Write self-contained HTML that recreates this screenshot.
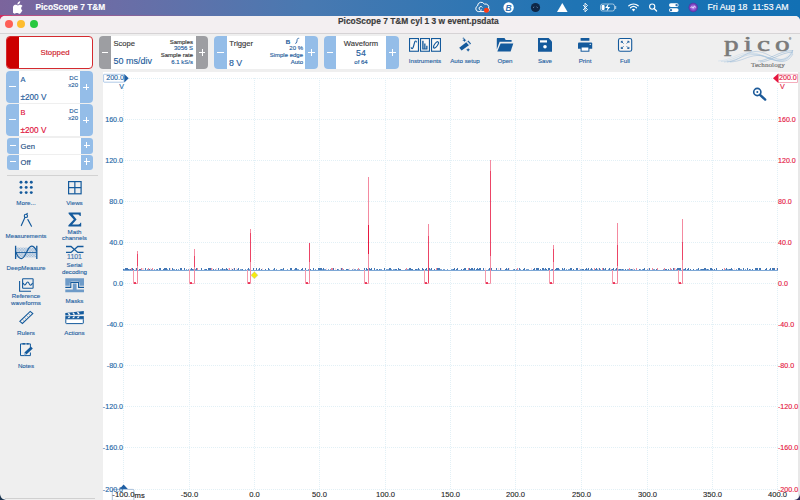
<!DOCTYPE html>
<html><head><meta charset="utf-8">
<style>
*{margin:0;padding:0;box-sizing:border-box}
html,body{width:800px;height:500px;overflow:hidden;background:#1b3a63;font-family:"Liberation Sans",sans-serif;-webkit-text-stroke-width:0.15px}
.a{position:absolute}
#menubar{left:0;top:0;width:800px;height:24px;background:linear-gradient(90deg,#7b649c 0px,#6b6da6 115px,#4979b1 305px,#1f74b4 575px,#1270b4 800px)}
.mt{color:#fff;font-size:8.3px;line-height:10px;white-space:nowrap}
#win{left:0;top:16px;width:800px;height:484px;background:#efefef;border-radius:5px 5px 5px 5px;overflow:hidden}
#title{left:0;top:0;width:800px;height:18px;background:#f3eff1;border-bottom:1px solid #d6d3d5}
.tl{width:7.8px;height:7.8px;border-radius:50%;top:4.4px}
.tt{font-weight:bold;font-size:8.4px;color:#3a3a3a;white-space:nowrap}
.panel{background:#fff;border-radius:4px;overflow:hidden}
.btn{color:#fff;text-align:center}
.bl{background:#94bde8}
.bg{background:#9d9ea2}
.blue{color:#1f5d9c}
.dk{color:#333}
.sm{font-size:6px;line-height:7px;white-space:nowrap;text-align:right}
.lab{font-size:6.2px;color:#22609f;-webkit-text-stroke:0.12px #22609f;white-space:nowrap;text-align:center;line-height:7px}
.ic{fill:#1c5a99;stroke:#1c5a99}
#chart{left:103px;top:72px;width:697px;height:428px;background:#fff}
.yl{font-size:7.9px;color:#2467a6;-webkit-text-stroke:0.15px #2467a6;text-align:right;width:40px;white-space:nowrap;line-height:8px;transform:scaleX(0.9);transform-origin:right center}
.yr{font-size:7.9px;color:#e5173f;-webkit-text-stroke:0.15px #e5173f;white-space:nowrap;line-height:8px;transform:scaleX(0.9);transform-origin:left center}
.xl{font-size:7.6px;color:#222;-webkit-text-stroke:0.1px #222;white-space:nowrap;line-height:8px;text-align:center;width:40px}
</style></head><body>
<div id="menubar" class="a">
  <svg class="a" style="left:13px;top:1px" width="10" height="13" viewBox="0 0 10 13"><path fill="#fff" d="M7.2 0.3c0.1 0.9-0.3 1.7-0.8 2.2-0.5 0.6-1.3 1-2 0.9-0.1-0.8 0.3-1.6 0.8-2.1 0.5-0.6 1.3-1 2-1zM9.4 9.3c-0.3 0.7-0.5 1-0.9 1.6-0.6 0.8-1.3 1.8-2.3 1.8-0.9 0-1.1-0.6-2.3-0.6-1.200 0-1.5 0.6-2.3 0.6-1 0-1.700-0.9-2.300-1.7C-0.300 8.800-0.5 6.500 0.300 5.200 0.900 4.300 1.800 3.800 2.700 3.800c0.900 0 1.500 0.600 2.300 0.600 0.700 0 1.200-0.600 2.300-0.600 0.800 0 1.600 0.400 2.200 1.200-1.900 1.100-1.600 3.800 0 4.300z"/></svg>
  <div class="a mt" style="left:35.5px;top:2.2px;font-weight:bold">PicoScope 7 T&amp;M</div>

 <svg class="a" style="left:470px;top:0" width="235" height="15" viewBox="470 0 235 15">
  <!-- cc icon -->
  <path d="M478.2 11.6 A3 3 0 0 1 477.6 5.9 A3.6 3.6 0 0 1 484.4 4.2 A3.2 3.2 0 0 1 488.6 8.2 A2 2 0 0 1 487 11.6 Z" fill="none" stroke="#fff" stroke-width="1"/>
  <path d="M481.8 9.9 A1.8 1.8 0 1 1 482.4 7.4" fill="none" stroke="#fff" stroke-width="1"/>
  <circle cx="486.4" cy="10.2" r="2.5" fill="#ff3b14"/>
  <!-- B circle -->
  <circle cx="508.6" cy="7.5" r="5.2" fill="#fff"/>
  <text x="508.6" y="10.6" font-family="Liberation Sans" font-weight="bold" font-style="italic" font-size="8.5" fill="#2f6fb1" text-anchor="middle">B</text>
  <!-- dark circle -->
  <circle cx="535.5" cy="7.5" r="4.6" fill="#0f2746"/>
  <path d="M533.2 7.6 l1 -0.7 M536.6 6.9 l1 0.7" stroke="#8fb0d8" stroke-width="0.8" fill="none"/>
  <!-- triangle -->
  <path d="M562.3 3 L567.6 12 H557 Z" fill="#fff"/>
  <!-- bluetooth -->
  <path d="M583 5 L587.5 9.5 L585 11.8 V3.2 L587.5 5.5 L583 10" fill="none" stroke="#fff" stroke-width="0.9"/>
  <!-- battery -->
  <rect x="600.5" y="4" width="14" height="7" rx="2" fill="none" stroke="#fff" stroke-width="0.8" opacity="0.7"/>
  <rect x="615.2" y="6" width="1" height="3" fill="#fff" opacity="0.7"/>
  <rect x="601.6" y="5.1" width="3" height="4.8" rx="0.8" fill="#fff"/>
  <path d="M608.6 3.6 L605.2 8 H607.6 L606.6 11.6 L610.2 7 H607.8 Z" fill="#fff"/>
  <!-- wifi -->
  <g fill="none" stroke="#fff" stroke-width="1.2" stroke-linecap="round">
   <path d="M628.8 5.8 A7 7 0 0 1 638.2 5.8"/>
   <path d="M630.5 7.8 A4.5 4.5 0 0 1 636.5 7.8"/>
  </g>
  <path d="M633.5 11.5 L631.8 9.6 A2.5 2.5 0 0 1 635.2 9.6 Z" fill="#fff"/>
  <!-- search -->
  <circle cx="652.2" cy="6.6" r="2.6" fill="none" stroke="#fff" stroke-width="1.1"/>
  <path d="M654.1 8.5 L656.6 11" stroke="#fff" stroke-width="1.2" stroke-linecap="round"/>
  <!-- control center -->
  <rect x="669" y="3.2" width="9.6" height="3.8" rx="1.9" fill="#fff"/>
  <rect x="669" y="8.2" width="9.6" height="3.8" rx="1.9" fill="#fff"/>
  <circle cx="676.6" cy="5.1" r="1.2" fill="#2f6fb1"/>
  <circle cx="671" cy="10.1" r="1.2" fill="#2f6fb1"/>
  <!-- siri -->
  <defs><radialGradient id="siri" cx="0.5" cy="0.5" r="0.5"><stop offset="0" stop-color="#c8a0ff"/><stop offset="0.6" stop-color="#8a4bc8"/><stop offset="1" stop-color="#5030a0"/></radialGradient></defs>
  <circle cx="693.2" cy="7.5" r="4.7" fill="url(#siri)"/>
  <path d="M690.5 7.8 C692 5 693 10 694.2 6.5 C695 4.5 695.5 8.5 696 7.5" stroke="#fff" stroke-width="0.7" fill="none"/>
 </svg>
  <div class="a mt" style="left:707.5px;top:2px;font-size:8.75px">Fri Aug 18&nbsp;&nbsp;11:53 AM</div>
</div>
<div class="a" style="left:0;top:15px;width:12px;height:8px;background:linear-gradient(90deg,#d42a5e,#c03a70)"></div>
<div id="win" class="a">
  <div id="title" class="a">
    <div class="a tl" style="left:4.85px;background:#fe5f57"></div>
    <div class="a tl" style="left:17.35px;background:#febc2e"></div>
    <div class="a tl" style="left:29.85px;background:#28c840"></div>
    <div class="a tt" style="left:338px;top:-0.2px">PicoScope 7 T&amp;M cyl 1 3 w event.psdata</div>
  </div>
</div>

<div class="a" style="left:4px;top:15px;width:200px;height:1px;background:linear-gradient(90deg,rgba(214,70,120,0.75),rgba(214,70,120,0))"></div>
<!-- toolbar -->
<div class="a" style="left:6px;top:36px;width:87px;height:33px;border:1px solid #d42a2f;border-radius:4px;background:#fff;overflow:hidden">
  <div class="a" style="left:0;top:0;width:12px;height:31px;background:#cc0000"></div>
</div>
<div class="a" style="left:40.5px;top:47.6px;font-size:7.8px;color:#d0202a;white-space:nowrap;line-height:9px">Stopped</div>

<div class="a panel" style="left:99px;top:36px;width:109px;height:33px"></div>
<div class="a btn bg" style="left:99px;top:36px;width:12px;height:33px;border-radius:4px 0 0 4px"></div>
<div class="a btn bg" style="left:196px;top:36px;width:12px;height:33px;border-radius:0 4px 4px 0"></div>
<div class="a dk" style="left:113.5px;top:38.5px;font-size:7.6px;line-height:9px;color:#3a3a3a">Scope</div>
<div class="a blue" style="left:113.5px;top:56px;font-size:9px;line-height:11px">50 ms/div</div>
<div class="a sm" style="right:607px;top:38.5px;color:#333">Samples</div>
<div class="a sm blue" style="right:607px;top:45.3px">3056 S</div>
<div class="a sm" style="right:607px;top:52.1px;color:#333">Sample rate</div>
<div class="a sm blue" style="right:607px;top:58.9px">6.1 kS/s</div>

<div class="a panel" style="left:214px;top:36px;width:104px;height:33px"></div>
<div class="a btn bl" style="left:214px;top:36px;width:13px;height:33px;border-radius:4px 0 0 4px"></div>
<div class="a btn bl" style="left:305px;top:36px;width:13px;height:33px;border-radius:0 4px 4px 0"></div>
<div class="a dk" style="left:229.3px;top:38.5px;font-size:7.6px;line-height:9px;color:#3a3a3a">Trigger</div>
<div class="a blue" style="left:229px;top:58.2px;font-size:8.8px;line-height:11px">8 V</div>
<div class="a sm blue" style="right:509.7px;top:38px;font-weight:bold;font-size:6.2px">B</div><svg class="a" style="left:294px;top:37px" width="7" height="8" viewBox="294 37 7 8"><path d="M295.2 43.4 Q296.6 43.4 296.8 42 L297.2 39.4 Q297.4 38.3 298.6 38.3 H299.2" fill="none" stroke="#3f74b0" stroke-width="1"/></svg>
<div class="a sm blue" style="right:497px;top:45.3px">20 %</div>
<div class="a sm blue" style="right:497px;top:52.1px">Simple edge</div>
<div class="a sm blue" style="right:497px;top:58.9px">Auto</div>

<div class="a panel" style="left:324px;top:36px;width:75px;height:33px"></div>
<div class="a btn bl" style="left:324px;top:36px;width:12px;height:33px;border-radius:4px 0 0 4px"></div>
<div class="a btn bl" style="left:386px;top:36px;width:13px;height:33px;border-radius:0 4px 4px 0"></div>
<div class="a" style="left:336px;width:50px;top:38.5px;font-size:7.6px;line-height:9px;color:#3a3a3a;text-align:center">Waveform</div>
<div class="a blue" style="left:336px;width:50px;top:48px;font-size:8.8px;line-height:10px;text-align:center">54</div>
<div class="a blue" style="left:336px;width:50px;top:59px;font-size:6px;line-height:7px;text-align:center">of 64</div>

<!-- pm -->
<div class="a" style="left:101.75px;top:52.00px;width:6.5px;height:1.0px;background:#fff"></div><div class="a" style="left:198.75px;top:52.00px;width:6.5px;height:1.0px;background:#fff"></div><div class="a" style="left:201.50px;top:49.25px;width:1.0px;height:6.5px;background:#fff"></div><div class="a" style="left:217.25px;top:52.00px;width:6.5px;height:1.0px;background:#fff"></div><div class="a" style="left:308.25px;top:52.00px;width:6.5px;height:1.0px;background:#fff"></div><div class="a" style="left:311.00px;top:49.25px;width:1.0px;height:6.5px;background:#fff"></div><div class="a" style="left:326.75px;top:52.00px;width:6.5px;height:1.0px;background:#fff"></div><div class="a" style="left:389.25px;top:52.00px;width:6.5px;height:1.0px;background:#fff"></div><div class="a" style="left:392.00px;top:49.25px;width:1.0px;height:6.5px;background:#fff"></div>

<!-- toolbar icons -->
<svg class="a" style="left:400px;top:34px" width="240" height="22" viewBox="400 34 240 22">
 <g fill="#faf8f6" stroke="#145a9c" stroke-width="1.1">
  <rect x="409.55" y="38.55" width="8.9" height="12.7"/>
  <rect x="420.55" y="38.55" width="8.9" height="12.7"/>
  <rect x="431.55" y="38.55" width="8.9" height="12.7"/>
 </g>
 <path d="M411.2 47.2 Q411.4 49 412.4 48.6 Q413 48.3 413.6 46 L414.6 42.4 Q415.2 40.6 416 41.2 Q416.4 41.6 416.5 42.4" fill="none" stroke="#145a9c" stroke-width="1.1"/>
 <path d="M422.2 40.8h1.4v8.6h-1.4z M424.2 43.5h1.3v5.9h-1.3z M426.2 45.8h1.3v3.6h-1.3z M422.2 48.6h5.3v0.9h-5.3z" fill="#145a9c"/>
 <ellipse cx="436" cy="44.9" rx="1.5" ry="3.7" transform="rotate(35 436 44.9)" fill="none" stroke="#145a9c" stroke-width="1.1"/>
 <!-- wand -->
 <path d="M459.2 47.8 L467.6 41.2 L470.3 44.2 L461.6 50.6 Z" fill="#145a9c"/>
 <path d="M466.2 42.3 L467.6 41.2 L470.3 44.2 L468.9 45.3 Z" fill="#fff" opacity="0.85"/>
 <path d="M467.6 41.2 L468.4 40.6 L471 43.6 L470.3 44.2Z" fill="#145a9c"/>
 <path d="M464.4 38.3 l0.7 1.3 1.3 0.6 -1.3 0.6 -0.7 1.3 -0.7 -1.3 -1.3 -0.6 1.3 -0.6z" fill="#145a9c"/>
 <circle cx="463.3" cy="38.2" r="0.6" fill="#145a9c"/>
 <path d="M468.1 47.9 l0.7 1.3 1.3 0.6 -1.3 0.6 -0.7 1.3 -0.7 -1.3 -1.3 -0.6 1.3 -0.6z" fill="#145a9c"/>
 <!-- folder -->
 <path d="M496.8 51.6 V38.4 Q496.8 38 497.2 38 H504.5 L505.7 40 H511.6 V41.7 H499.6 L496.8 49.5 Z" fill="#145a9c"/>
 <path d="M500.6 43.4 H513.3 L510.6 51.6 H497.3 Z" fill="#145a9c"/>
 <!-- save -->
 <path d="M538 38 H548.6 L552 41.4 V51.8 H538 Z" fill="#145a9c"/>
 <rect x="540" y="40.3" width="7" height="2.2" fill="#fff"/>
 <circle cx="545" cy="46.7" r="1.8" fill="#fff"/>
 <!-- print -->
 <rect x="580.6" y="38" width="8.8" height="2.8" rx="0.4" fill="#145a9c"/>
 <path d="M578 43.4 Q578 42.4 579 42.4 H591.2 Q592.2 42.4 592.2 43.4 V48.8 H578 Z" fill="#145a9c"/>
 <rect x="581.1" y="47" width="7.8" height="4.2" fill="#fff" stroke="#145a9c" stroke-width="1"/>
 <circle cx="590.2" cy="44.4" r="0.6" fill="#fff"/>
 <!-- full -->
 <rect x="618.5" y="38.5" width="13.2" height="12.8" rx="1.8" fill="#f7f5f4" stroke="#145a9c" stroke-width="1.1"/>
 <g stroke="#145a9c" stroke-width="0.9" fill="none">
  <path d="M621.3 41.3 L623.5 43.5 M621.3 41.3 h1.6 M621.3 41.3 v1.6"/>
  <path d="M628.9 41.3 L626.7 43.5 M628.9 41.3 h-1.6 M628.9 41.3 v1.6"/>
  <path d="M621.3 48.5 L623.5 46.3 M621.3 48.5 h1.6 M621.3 48.5 v-1.6"/>
  <path d="M628.9 48.5 L626.7 46.3 M628.9 48.5 h-1.6 M628.9 48.5 v-1.6"/>
 </g>
</svg>
<div class="a lab" style="left:405px;width:40px;top:56.5px">Instruments</div>
<div class="a lab" style="left:445px;width:40px;top:56.5px">Auto setup</div>
<div class="a lab" style="left:485px;width:40px;top:56.5px">Open</div>
<div class="a lab" style="left:525px;width:40px;top:56.5px">Save</div>
<div class="a lab" style="left:565px;width:40px;top:56.5px">Print</div>
<div class="a lab" style="left:605px;width:40px;top:56.5px">Full</div>


<!-- logo -->
<div class="a" style="left:723.5px;top:31.6px;font-family:'Liberation Serif',serif;font-size:20.2px;line-height:24px;color:#7a7a7a;white-space:nowrap;letter-spacing:3.5px;transform:scaleX(1.45);transform-origin:left top;-webkit-text-stroke:0.5px #7a7a7a">pico</div>
<div class="a" style="left:789px;top:37px;font-size:3px;color:#888">&#174;</div>
<svg class="a" style="left:718px;top:49px" width="76" height="14" viewBox="0 0 76 14">
 <g fill="none" stroke-width="0.45">
  <path stroke="#c5d9ea" d="M0 12 C12 11.5 20 4 30 3.5 C42 3 50 11 60 11 C67 11 71 5 75 2"/>
  <path stroke="#b3cde3" d="M3 12.5 C15 12 22 5 32 4.5 C44 4 51 11.5 61 11.5 C68 11.5 72 6 75 3"/>
  <path stroke="#a3c2dd" d="M6 13 C18 12.5 24 6 34 5.5 C46 5 52 12 62 12 C69 12 72 7 75 4"/>
  <path stroke="#8fb4d4" d="M9 13 C21 12.5 27 3 37 2.5 C48 2 54 10 63 10.5 C70 10.5 73 5 75 1"/>
  <path stroke="#8fb4d4" d="M12 13 C24 12.5 29 7 39 6.5 C50 6 55 12.5 64 12.5 C70 12.5 73 8 75 5"/>
  <path stroke="#7aa6cc" d="M40 12 C50 12 60 2 75 1.5"/>
  <path stroke="#7aa6cc" d="M42 13 C52 13 62 3.5 75 3"/>
 </g>
</svg>
<div class="a" style="left:751px;top:61px;font-family:'Liberation Serif',serif;font-size:7px;line-height:8px;color:#6f6f6f;white-space:nowrap;letter-spacing:0.1px">Technology</div>

<!-- channels -->
<div class="a panel" style="left:6px;top:71px;width:86.5px;height:32px"></div><div class="a btn bl" style="left:6px;top:71px;width:13px;height:32px;border-radius:4px 0 0 4px"></div><div class="a btn bl" style="left:80px;top:71px;width:12.5px;height:32px;border-radius:0 4px 4px 0"></div><div class="a" style="left:9.25px;top:86.00px;width:6.5px;height:1.0px;background:#fff"></div><div class="a" style="left:82.95px;top:86.50px;width:6.5px;height:1.0px;background:#fff"></div><div class="a" style="left:85.70px;top:83.75px;width:1.0px;height:6.5px;background:#fff"></div><div class="a" style="left:20.5px;top:74.5px;font-size:7.4px;line-height:9px;color:#1f5d9c">A</div><div class="a" style="left:20.5px;top:92.5px;font-size:8.2px;line-height:10px;color:#1f5d9c">&#177;200 V</div><div class="a sm blue" style="right:722px;top:74.5px">DC</div><div class="a sm blue" style="right:722px;top:81.8px">x20</div><div class="a panel" style="left:6px;top:104px;width:86.5px;height:32px"></div><div class="a btn bl" style="left:6px;top:104px;width:13px;height:32px;border-radius:4px 0 0 4px"></div><div class="a btn bl" style="left:80px;top:104px;width:12.5px;height:32px;border-radius:0 4px 4px 0"></div><div class="a" style="left:9.25px;top:119.00px;width:6.5px;height:1.0px;background:#fff"></div><div class="a" style="left:82.95px;top:119.50px;width:6.5px;height:1.0px;background:#fff"></div><div class="a" style="left:85.70px;top:116.75px;width:1.0px;height:6.5px;background:#fff"></div><div class="a" style="left:20.5px;top:107.5px;font-size:7.4px;line-height:9px;color:#e0103a">B</div><div class="a" style="left:20.5px;top:125.5px;font-size:8.2px;line-height:10px;color:#e0103a">&#177;200 V</div><div class="a sm blue" style="right:722px;top:107.5px">DC</div><div class="a sm blue" style="right:722px;top:114.8px">x20</div><div class="a panel" style="left:7px;top:138px;width:86px;height:16px;border-radius:3px"></div><div class="a btn bl" style="left:7px;top:138px;width:12px;height:16px;border-radius:3px 0 0 3px"></div><div class="a btn bl" style="left:80.7px;top:138px;width:12.3px;height:16px;border-radius:0 3px 3px 0"></div><div class="a" style="left:9.75px;top:144.50px;width:6.5px;height:1.0px;background:#fff"></div><div class="a" style="left:83.55px;top:144.50px;width:6.5px;height:1.0px;background:#fff"></div><div class="a" style="left:86.30px;top:141.75px;width:1.0px;height:6.5px;background:#fff"></div><div class="a" style="left:20.5px;top:142px;font-size:7.6px;line-height:9px;color:#1f4f86">Gen</div><div class="a panel" style="left:7px;top:155px;width:86px;height:15px;border-radius:3px"></div><div class="a btn bl" style="left:7px;top:155px;width:12px;height:15px;border-radius:3px 0 0 3px"></div><div class="a btn bl" style="left:80.7px;top:155px;width:12.3px;height:15px;border-radius:0 3px 3px 0"></div><div class="a" style="left:9.75px;top:161.00px;width:6.5px;height:1.0px;background:#fff"></div><div class="a" style="left:83.55px;top:161.00px;width:6.5px;height:1.0px;background:#fff"></div><div class="a" style="left:86.30px;top:158.25px;width:1.0px;height:6.5px;background:#fff"></div><div class="a" style="left:20.5px;top:158px;font-size:7.6px;line-height:9px;color:#1f4f86">Off</div><div class="a" style="left:7px;top:175px;width:91px;height:1px;background:#d2d2d2"></div>

<!-- sidebar icons -->
<svg class="a" style="left:0;top:172px" width="100" height="200" viewBox="0 172 100 200">
 <defs>
  <pattern id="hat" width="1.6" height="1.6" patternUnits="userSpaceOnUse"><rect width="0.8" height="0.8" fill="#7fa6cf"/><rect x="0.8" y="0.8" width="0.8" height="0.8" fill="#7fa6cf"/></pattern>
 </defs>
 <g fill="#145a9c">
  <circle cx="21" cy="182.2" r="1.45"/><circle cx="26.2" cy="182.2" r="1.45"/><circle cx="31.3" cy="182.2" r="1.45"/>
  <circle cx="21" cy="187.4" r="1.45"/><circle cx="26.2" cy="187.4" r="1.45"/><circle cx="31.3" cy="187.4" r="1.45"/>
  <circle cx="21" cy="192.6" r="1.45"/><circle cx="26.2" cy="192.6" r="1.45"/><circle cx="31.3" cy="192.6" r="1.45"/>
 </g>
 <g fill="none" stroke="#145a9c" stroke-width="1.2">
  <rect x="68.6" y="181.6" width="12.5" height="12.2"/>
  <path d="M74.85 181.6 V193.8 M68.6 187.7 H81.1"/>
 </g>
 <!-- measurements -->
 <g fill="none" stroke="#145a9c" stroke-width="1.15" stroke-linecap="round">
  <circle cx="25.9" cy="215.9" r="1.6"/>
  <path d="M24.9 217.6 L21.3 225.6"/>
  <path d="M27.9 219.6 L31.5 226.2"/>
  <path d="M26.6 214.2 L27.3 213.4"/>
 </g>
 <!-- sigma -->
 <path d="M68.6 212.6 H80.8 V215.9 L79.8 215.9 Q79.4 214.6 77.8 214.6 H72.6 L76.6 219.4 L72.2 224.4 H78.4 Q80 224.4 80.4 222.8 L81.2 222.8 V226.5 H68.4 V225.3 L73.8 219.5 L68.6 213.8 Z" fill="#145a9c"/>
 <!-- deepmeasure -->
 <rect x="16.2" y="247.6" width="20" height="4.4" fill="url(#hat)" opacity="0.9"/>
 <rect x="16.2" y="253" width="20" height="4.4" fill="url(#hat)" opacity="0.9"/>
 <g fill="none" stroke="#145a9c">
  <path d="M15.6 245.8 V259.1 M36.8 245.8 V259.1" stroke-width="1.3"/>
  <path d="M16 252.5 H36.5" stroke-width="0.9"/>
  <path d="M16.2 252.5 C18 258.5 19.8 258.6 21.4 258.6 C23.2 258.6 24.8 256 26.4 252.5 C28 249 29.5 246.1 31.5 246.1 C33.5 246.1 35.3 248 36.5 251" stroke-width="1.1"/>
 </g>
 <!-- serial -->
 <g fill="none" stroke="#145a9c" stroke-width="1.3">
  <path d="M66 246.5 H71 L77.8 252.4 H83.5"/>
  <path d="M66 252.4 H71 L77.8 246.5 H83.5"/>
 </g>
 <!-- reference -->
 <g fill="none" stroke="#145a9c" stroke-width="1.1">
  <rect x="22.6" y="278.7" width="10.5" height="9.6" rx="0.5"/>
  <path d="M19.6 281 V291.3 H31"/>
  <path d="M23.2 283 C24.2 285.2 25.2 285.8 26.2 283.6 C27.2 281.6 28.2 281.4 29.2 283.8 C30.2 286 31.2 285.6 32.6 283"/>
 </g>
 <!-- masks -->
 <path d="M65.3 278.2 H84 V285.7 H79.6 V283 Q79.6 281.2 77.8 281.2 H71.6 Q69.8 281.2 69.8 283 V285.7 H65.3 Z" fill="#6e9bc8"/>
 <path d="M65.3 289.4 H84 V292.3 H65.3 Z M72.8 283.6 H76.6 V289.4 H72.8 Z" fill="#6e9bc8"/>
 <path d="M65.3 287.4 H70.8 V282.4 H78.6 V287.4 H84" fill="none" stroke="#145a9c" stroke-width="1.1"/>
 <!-- rulers -->
 <g fill="none" stroke="#145a9c" stroke-width="1.1">
  <path d="M19.8 321.3 L30.2 311.4 L32.8 313.6 L22.4 323.5 Z"/>
  <path d="M23.5 320.3 l-0.9 -0.8 M25.5 318.4 l-0.9 -0.8 M27.5 316.5 l-0.9 -0.8 M29.5 314.6 l-0.9 -0.8" stroke-width="0.8"/>
 </g>
 <!-- actions -->
 <path d="M65.3 313 L83.8 311 V314.2 L65.3 315.6 Z" fill="#145a9c"/>
 <g fill="#fff" opacity="0.95">
  <path d="M67.6 313.2 l1.6 -0.2 1.4 2 -1.6 0.15z M72.2 312.7 l1.6 -0.2 1.4 2 -1.6 0.15z M76.8 312.2 l1.6 -0.2 1.4 2 -1.6 0.15z"/>
 </g>
 <rect x="65.3" y="316.1" width="18.5" height="2.9" fill="#145a9c"/>
 <g fill="#fff" opacity="0.95">
  <path d="M67.4 318.5 l1.4 -2 h1.7 l-1.4 2z M72 318.5 l1.4 -2 h1.7 l-1.4 2z M76.6 318.5 l1.4 -2 h1.7 l-1.4 2z"/>
 </g>
 <rect x="65.8" y="318.8" width="17.5" height="4.8" rx="0.6" fill="#fff" stroke="#145a9c" stroke-width="1"/>
 <!-- notes -->
 <g fill="none" stroke="#145a9c" stroke-width="1">
  <path d="M30.4 343.9 H20.5 V355.6 H30.4 V352.5 M30.4 347.6 V343.9"/>
 </g>
 <rect x="22.4" y="343" width="2.6" height="1.6" rx="0.6" fill="#145a9c"/>
 <rect x="26.9" y="343" width="1.8" height="1.6" rx="0.6" fill="#145a9c"/>
 <path d="M24.4 352.6 L30.8 346.6 L32.8 348.6 L26.4 354.6 Z" fill="#145a9c"/>
 <path d="M24.4 352.6 L26.4 354.6 L24 355.4 Z" fill="#8ab0d6"/>
</svg>
<div class="a lab" style="left:6px;width:40px;top:198.8px">More...</div>
<div class="a lab" style="left:54.5px;width:40px;top:198.8px">Views</div>
<div class="a lab" style="left:1px;width:50px;top:232px">Measurements</div>
<div class="a lab" style="left:54.5px;width:40px;top:228.5px;line-height:6.5px">Math<br>channels</div>
<div class="a lab" style="left:1px;width:50px;top:263.5px">DeepMeasure</div>
<div class="a lab" style="left:54.5px;width:40px;top:252.8px;font-size:6.9px;line-height:8px;color:#3f74b0;-webkit-text-stroke:0.15px #3f74b0">1101</div>
<div class="a lab" style="left:54.5px;width:40px;top:260.5px;line-height:7px">Serial<br>decoding</div>
<div class="a lab" style="left:6px;width:40px;top:293px;line-height:6.5px">Reference<br>waveforms</div>
<div class="a lab" style="left:54.5px;width:40px;top:297px">Masks</div>
<div class="a lab" style="left:6px;width:40px;top:328.7px">Rulers</div>
<div class="a lab" style="left:54.5px;width:40px;top:328.7px">Actions</div>
<div class="a lab" style="left:6px;width:40px;top:361.5px">Notes</div>

<!-- chart -->
<div id="chart" class="a"></div>
<div class="a" style="left:798px;top:72px;width:2px;height:428px;background:#e8e8e8"></div>
<div class="a" style="left:5px;top:498px;width:90px;height:1px;background:#d0d0d0"></div>
<svg class="a" style="left:0;top:0" width="800" height="500" viewBox="0 0 800 500">
<path d="M123.5 88V484M189.5 78V490M254.5 78V490M319.5 78V490M385.5 78V490M450.5 78V490M515.5 78V490M581.5 78V490M647.5 78V490M712.5 78V490M777.5 88V490M129 78.5H773M123 119.5H778M123 160.5H778M123 201.5H778M123 242.5H778M123 283.5H778M123 324.5H778M123 365.5H778M123 406.5H778M123 447.5H778M123 489.5H778" stroke="#e2f0f6" stroke-width="1" stroke-dasharray="1 1" fill="none"/>
<path d="M123 270.5H778" stroke="#7ea8d6" stroke-width="1" fill="none"/>
<path d="M123 269h1v1h-1zM125 268h1v2h-1zM126 268h1v2h-1zM127 268h1v2h-1zM128 269h1v1h-1zM130 269h1v1h-1zM132 268h1v2h-1zM133 269h1v1h-1zM136 268h1v2h-1zM139 269h1v1h-1zM140 269h1v1h-1zM145 268h1v2h-1zM149 269h1v1h-1zM157 269h1v1h-1zM159 268h1v2h-1zM160 268h1v2h-1zM163 269h1v1h-1zM164 268h1v2h-1zM165 268h1v2h-1zM166 268h1v2h-1zM169 268h1v2h-1zM172 268h1v2h-1zM176 269h1v1h-1zM180 268h1v2h-1zM181 268h1v2h-1zM184 268h1v2h-1zM191 268h1v2h-1zM192 269h1v1h-1zM196 268h1v2h-1zM201 268h1v2h-1zM205 269h1v1h-1zM206 269h1v1h-1zM208 268h1v2h-1zM209 268h1v2h-1zM210 268h1v2h-1zM213 269h1v1h-1zM218 268h1v2h-1zM222 268h1v2h-1zM224 269h1v1h-1zM226 268h1v2h-1zM227 269h1v1h-1zM232 269h1v1h-1zM234 268h1v2h-1zM238 268h1v2h-1zM242 269h1v1h-1zM248 268h1v2h-1zM253 268h1v2h-1zM256 268h1v2h-1zM259 268h1v2h-1zM261 269h1v1h-1zM265 269h1v1h-1zM268 268h1v2h-1zM274 268h1v2h-1zM281 269h1v1h-1zM283 268h1v2h-1zM290 268h1v2h-1zM291 268h1v2h-1zM295 268h1v2h-1zM296 268h1v2h-1zM301 269h1v1h-1zM302 268h1v2h-1zM305 268h1v2h-1zM310 269h1v1h-1zM313 268h1v2h-1zM318 268h1v2h-1zM319 268h1v2h-1zM320 268h1v2h-1zM321 268h1v2h-1zM323 268h1v2h-1zM333 268h1v2h-1zM337 269h1v1h-1zM341 268h1v2h-1zM346 269h1v1h-1zM347 269h1v1h-1zM364 268h1v2h-1zM366 268h1v2h-1zM367 269h1v1h-1zM369 268h1v2h-1zM370 269h1v1h-1zM371 268h1v2h-1zM374 268h1v2h-1zM377 269h1v1h-1zM379 269h1v1h-1zM384 268h1v2h-1zM389 268h1v2h-1zM390 268h1v2h-1zM395 269h1v1h-1zM396 269h1v1h-1zM398 268h1v2h-1zM399 269h1v1h-1zM400 269h1v1h-1zM409 268h1v2h-1zM410 268h1v2h-1zM411 269h1v1h-1zM412 269h1v1h-1zM415 269h1v1h-1zM416 269h1v1h-1zM418 268h1v2h-1zM422 268h1v2h-1zM423 269h1v1h-1zM425 269h1v1h-1zM426 268h1v2h-1zM429 268h1v2h-1zM431 268h1v2h-1zM434 269h1v1h-1zM437 268h1v2h-1zM438 268h1v2h-1zM439 268h1v2h-1zM453 269h1v1h-1zM454 268h1v2h-1zM456 269h1v1h-1zM457 268h1v2h-1zM461 269h1v1h-1zM463 269h1v1h-1zM464 268h1v2h-1zM465 268h1v2h-1zM469 268h1v2h-1zM470 269h1v1h-1zM471 268h1v2h-1zM472 268h1v2h-1zM474 268h1v2h-1zM476 269h1v1h-1zM477 268h1v2h-1zM478 269h1v1h-1zM479 268h1v2h-1zM480 268h1v2h-1zM483 268h1v2h-1zM489 268h1v2h-1zM491 268h1v2h-1zM496 268h1v2h-1zM500 268h1v2h-1zM505 269h1v1h-1zM506 268h1v2h-1zM508 268h1v2h-1zM514 269h1v1h-1zM519 268h1v2h-1zM523 269h1v1h-1zM524 268h1v2h-1zM533 269h1v1h-1zM534 268h1v2h-1zM536 268h1v2h-1zM537 268h1v2h-1zM538 268h1v2h-1zM540 269h1v1h-1zM542 268h1v2h-1zM543 268h1v2h-1zM545 268h1v2h-1zM546 269h1v1h-1zM548 268h1v2h-1zM549 268h1v2h-1zM552 269h1v1h-1zM555 269h1v1h-1zM556 268h1v2h-1zM557 268h1v2h-1zM558 268h1v2h-1zM562 268h1v2h-1zM564 268h1v2h-1zM570 268h1v2h-1zM571 268h1v2h-1zM573 269h1v1h-1zM576 268h1v2h-1zM577 268h1v2h-1zM582 269h1v1h-1zM583 269h1v1h-1zM585 269h1v1h-1zM586 268h1v2h-1zM588 268h1v2h-1zM591 268h1v2h-1zM595 269h1v1h-1zM596 268h1v2h-1zM599 268h1v2h-1zM603 268h1v2h-1zM605 268h1v2h-1zM609 268h1v2h-1zM612 269h1v1h-1zM613 268h1v2h-1zM616 268h1v2h-1zM619 269h1v1h-1zM620 269h1v1h-1zM622 269h1v1h-1zM625 269h1v1h-1zM631 269h1v1h-1zM639 269h1v1h-1zM643 269h1v1h-1zM644 268h1v2h-1zM649 268h1v2h-1zM656 269h1v1h-1zM665 269h1v1h-1zM666 269h1v1h-1zM668 269h1v1h-1zM673 268h1v2h-1zM677 268h1v2h-1zM678 268h1v2h-1zM679 268h1v2h-1zM680 268h1v2h-1zM684 269h1v1h-1zM685 268h1v2h-1zM687 269h1v1h-1zM688 268h1v2h-1zM690 269h1v1h-1zM693 269h1v1h-1zM698 268h1v2h-1zM701 269h1v1h-1zM702 269h1v1h-1zM703 269h1v1h-1zM704 268h1v2h-1zM705 268h1v2h-1zM707 269h1v1h-1zM710 268h1v2h-1zM711 268h1v2h-1zM712 269h1v1h-1zM714 269h1v1h-1zM716 268h1v2h-1zM722 269h1v1h-1zM726 268h1v2h-1zM729 269h1v1h-1zM730 269h1v1h-1zM731 268h1v2h-1zM738 268h1v2h-1zM739 268h1v2h-1zM743 268h1v2h-1zM747 268h1v2h-1zM749 269h1v1h-1zM752 269h1v1h-1zM755 268h1v2h-1zM756 268h1v2h-1zM757 268h1v2h-1zM759 268h1v2h-1zM760 268h1v2h-1zM765 269h1v1h-1zM766 268h1v2h-1zM770 268h1v2h-1zM772 268h1v2h-1zM773 268h1v2h-1zM774 268h1v2h-1zM777 268h1v2h-1z" fill="#2f68ad" opacity="0.9"/>
<path d="M124 269h1v1h-1zM129 269h1v1h-1zM137 269h1v1h-1zM147 269h1v1h-1zM151 269h1v1h-1zM154 269h1v1h-1zM156 269h1v1h-1zM167 269h1v1h-1zM173 269h1v1h-1zM174 269h1v1h-1zM178 269h1v1h-1zM186 269h1v1h-1zM188 269h1v1h-1zM190 269h1v1h-1zM193 269h1v1h-1zM195 269h1v1h-1zM204 269h1v1h-1zM215 269h1v1h-1zM220 269h1v1h-1zM221 269h1v1h-1zM223 269h1v1h-1zM225 269h1v1h-1zM237 269h1v1h-1zM240 269h1v1h-1zM241 269h1v1h-1zM245 269h1v1h-1zM247 269h1v1h-1zM249 269h1v1h-1zM258 269h1v1h-1zM269 269h1v1h-1zM273 269h1v1h-1zM276 269h1v1h-1zM280 269h1v1h-1zM282 269h1v1h-1zM287 269h1v1h-1zM294 269h1v1h-1zM297 269h1v1h-1zM298 269h1v1h-1zM308 269h1v1h-1zM315 269h1v1h-1zM322 269h1v1h-1zM324 269h1v1h-1zM325 269h1v1h-1zM328 269h1v1h-1zM330 269h1v1h-1zM338 269h1v1h-1zM343 269h1v1h-1zM348 269h1v1h-1zM352 269h1v1h-1zM354 269h1v1h-1zM355 269h1v1h-1zM357 269h1v1h-1zM359 269h1v1h-1zM368 269h1v1h-1zM376 269h1v1h-1zM380 269h1v1h-1zM381 269h1v1h-1zM386 269h1v1h-1zM387 269h1v1h-1zM388 269h1v1h-1zM391 269h1v1h-1zM393 269h1v1h-1zM394 269h1v1h-1zM405 269h1v1h-1zM407 269h1v1h-1zM408 269h1v1h-1zM417 269h1v1h-1zM419 269h1v1h-1zM430 269h1v1h-1zM440 269h1v1h-1zM441 269h1v1h-1zM443 269h1v1h-1zM444 269h1v1h-1zM447 269h1v1h-1zM451 269h1v1h-1zM452 269h1v1h-1zM473 269h1v1h-1zM488 269h1v1h-1zM507 269h1v1h-1zM513 269h1v1h-1zM516 269h1v1h-1zM520 269h1v1h-1zM526 269h1v1h-1zM527 269h1v1h-1zM528 269h1v1h-1zM544 269h1v1h-1zM551 269h1v1h-1zM559 269h1v1h-1zM563 269h1v1h-1zM566 269h1v1h-1zM568 269h1v1h-1zM569 269h1v1h-1zM580 269h1v1h-1zM581 269h1v1h-1zM587 269h1v1h-1zM590 269h1v1h-1zM592 269h1v1h-1zM597 269h1v1h-1zM600 269h1v1h-1zM604 269h1v1h-1zM608 269h1v1h-1zM611 269h1v1h-1zM615 269h1v1h-1zM618 269h1v1h-1zM621 269h1v1h-1zM623 269h1v1h-1zM627 269h1v1h-1zM628 269h1v1h-1zM630 269h1v1h-1zM632 269h1v1h-1zM634 269h1v1h-1zM640 269h1v1h-1zM642 269h1v1h-1zM647 269h1v1h-1zM653 269h1v1h-1zM654 269h1v1h-1zM663 269h1v1h-1zM671 269h1v1h-1zM676 269h1v1h-1zM683 269h1v1h-1zM696 269h1v1h-1zM697 269h1v1h-1zM700 269h1v1h-1zM706 269h1v1h-1zM708 269h1v1h-1zM725 269h1v1h-1zM727 269h1v1h-1zM728 269h1v1h-1zM732 269h1v1h-1zM736 269h1v1h-1zM740 269h1v1h-1zM741 269h1v1h-1zM745 269h1v1h-1zM750 269h1v1h-1zM769 269h1v1h-1z" fill="#7aa3d2"/>
<path d="M135 268h1v2h-1zM142 268h1v2h-1zM143 268h1v2h-1zM150 268h1v2h-1zM170 268h1v2h-1zM189 268h1v2h-1zM212 268h1v2h-1zM216 268h1v2h-1zM228 268h1v2h-1zM231 268h1v2h-1zM233 268h1v2h-1zM236 268h1v2h-1zM262 268h1v2h-1zM326 268h1v2h-1zM335 268h1v2h-1zM340 268h1v2h-1zM349 268h1v2h-1zM353 268h1v2h-1zM485 268h1v2h-1zM498 268h1v2h-1zM501 268h1v2h-1zM509 268h1v2h-1zM531 268h1v2h-1zM579 268h1v2h-1zM598 268h1v2h-1zM610 268h1v2h-1zM633 268h1v2h-1zM648 268h1v2h-1zM675 268h1v2h-1zM734 268h1v2h-1zM776 268h1v2h-1z" fill="#f9dde3"/>
<path d="M131 268h1v2h-1zM141 268h1v2h-1zM148 268h1v2h-1zM152 268h1v2h-1zM197 268h1v2h-1zM211 268h1v2h-1zM229 268h1v2h-1zM309 268h1v2h-1zM331 268h1v2h-1zM332 268h1v2h-1zM342 268h1v2h-1zM358 268h1v2h-1zM406 268h1v2h-1zM428 268h1v2h-1zM436 268h1v2h-1zM468 268h1v2h-1zM517 268h1v2h-1zM594 268h1v2h-1zM602 268h1v2h-1zM629 268h1v2h-1zM636 268h1v2h-1zM652 268h1v2h-1zM657 268h1v2h-1zM664 268h1v2h-1zM670 268h1v2h-1zM674 268h1v2h-1zM724 268h1v2h-1z" fill="#e43558" opacity="0.6"/>
<path d="M133.5 270V283.5H137.5M189.5 270V283.5H194.5M247.5 270V283.5H250.5M305.5 270V283.5H309.5M364.5 270V283.5H368.5M424.5 270V283.5H428.5M485.5 270V283.5H490.5M549.5 270V283.5H553.5M612.5 270V283.5H617.5M678.5 270V283.5H682.5" stroke="#f59bad" stroke-width="1" fill="none"/>
<path d="M137.5 283.5V251M194.5 283.5V249M250.5 283.5V229M309.5 283.5V243M368.5 283.5V177M428.5 283.5V224M490.5 283.5V160M553.5 283.5V245M617.5 283.5V223M682.5 283.5V219" stroke="#f48aa0" stroke-width="1" fill="none"/>
<path d="M137.5 266V254M194.5 267V256M250.5 262V233M309.5 262V243M368.5 254V225M428.5 283V236M490.5 256V171M553.5 262V249M617.5 266V245M682.5 260V242" stroke="#ec4466" stroke-width="1" fill="none"/>
<path d="M134 282h2v2h-2zM190 282h2v2h-2zM248 282h2v2h-2zM306 282h2v2h-2zM365 282h2v2h-2zM425 282h2v2h-2zM486 282h2v2h-2zM550 282h2v2h-2zM613 282h2v2h-2zM679 282h2v2h-2z" fill="#e8173f" opacity="0.8"/>
<path d="M368.5 254V225" stroke="#e8173f" stroke-width="1" fill="none"/>
<path d="M254.4 271.6 L258 275.2 L254.4 278.8 L250.8 275.2Z" fill="#f4ea12" stroke="#c8c0d8" stroke-width="0.5"/>
<rect x="103.6" y="74.3" width="20.4" height="7.9" fill="#fff" stroke="#7aa6d6" stroke-width="0.6" rx="0.6"/>
<path d="M124.3 74 L128.7 78.3 L124.3 82.6Z" fill="#1f5fa4"/>
<path d="M119.6 489 L123.6 484.4 L127.8 489Z" fill="#1f5fa4"/>
<rect x="778.3" y="74.2" width="19.2" height="8.2" fill="#fff" stroke="#ef8aa0" stroke-width="0.7"/>
<path d="M778.3 73.6 L773 78.3 L778.3 83Z" fill="#e5173f"/>
<rect x="112.3" y="489.4" width="21.6" height="11" fill="#fff" stroke="#88a8cc" stroke-width="0.7" rx="0.8"/>
<g fill="none" stroke="#1c5a99"><circle cx="757.3" cy="92" r="3.6" stroke-width="1.6"/><path d="M760 94.8 L765.2 99.6" stroke-width="2.4" stroke-linecap="round"/></g><circle cx="757.3" cy="92" r="1" fill="#1c5a99"/>
</svg>
<div class="a yl" style="left:83.5px;top:74.0px">200.0</div>
<div class="a yl" style="left:83.5px;top:82.8px">V</div>
<div class="a yr" style="left:778.8px;top:74.0px">200.0</div>
<div class="a yr" style="left:779.8px;top:82.8px">V</div>
<div class="a yl" style="left:83.2px;top:115.6px">160.0</div>
<div class="a yr" style="left:778.3px;top:115.6px">160.0</div>
<div class="a yl" style="left:83.2px;top:156.6px">120.0</div>
<div class="a yr" style="left:778.3px;top:156.6px">120.0</div>
<div class="a yl" style="left:83.2px;top:197.6px">80.0</div>
<div class="a yr" style="left:778.3px;top:197.6px">80.0</div>
<div class="a yl" style="left:83.2px;top:238.6px">40.0</div>
<div class="a yr" style="left:778.3px;top:238.6px">40.0</div>
<div class="a yl" style="left:83.2px;top:279.6px">0.0</div>
<div class="a yr" style="left:778.3px;top:279.6px">0.0</div>
<div class="a yl" style="left:83.2px;top:320.6px">-40.0</div>
<div class="a yr" style="left:778.3px;top:320.6px">-40.0</div>
<div class="a yl" style="left:83.2px;top:361.6px">-80.0</div>
<div class="a yr" style="left:778.3px;top:361.6px">-80.0</div>
<div class="a yl" style="left:83.2px;top:402.6px">-120.0</div>
<div class="a yr" style="left:778.3px;top:402.6px">-120.0</div>
<div class="a yl" style="left:83.2px;top:443.6px">-160.0</div>
<div class="a yr" style="left:778.3px;top:443.6px">-160.0</div>
<div class="a yl" style="left:83.2px;top:485.6px">-200.0</div>
<div class="a yr" style="left:778.3px;top:485.6px">-200.0</div>
<div class="a xl" style="left:103.5px;top:491.2px;font-size:7.9px;left:103.5px">-100.0</div>
<div class="a xl" style="left:169.5px;top:491.2px">-50.0</div>
<div class="a xl" style="left:234.5px;top:491.2px">0.0</div>
<div class="a xl" style="left:299.5px;top:491.2px">50.0</div>
<div class="a xl" style="left:365.5px;top:491.2px">100.0</div>
<div class="a xl" style="left:430.5px;top:491.2px">150.0</div>
<div class="a xl" style="left:495.5px;top:491.2px">200.0</div>
<div class="a xl" style="left:561.5px;top:491.2px">250.0</div>
<div class="a xl" style="left:627.5px;top:491.2px">300.0</div>
<div class="a xl" style="left:692.5px;top:491.2px">350.0</div>
<div class="a xl" style="left:757.5px;top:491.2px">400.0</div>
<div class="a" style="left:134.6px;top:491.5px;font-size:7.6px;line-height:8px;color:#222">ms</div>
<!-- /chart -->
<svg class="a" style="left:0;top:494px" width="800" height="6" viewBox="0 494 800 6"><path d="M0 494 V500 H6 A6 6 0 0 1 0 494Z" fill="#1b3550"/><path d="M800 494 V500 H794 A6 6 0 0 0 800 494Z" fill="#2a2c5a"/></svg>
</body></html>
